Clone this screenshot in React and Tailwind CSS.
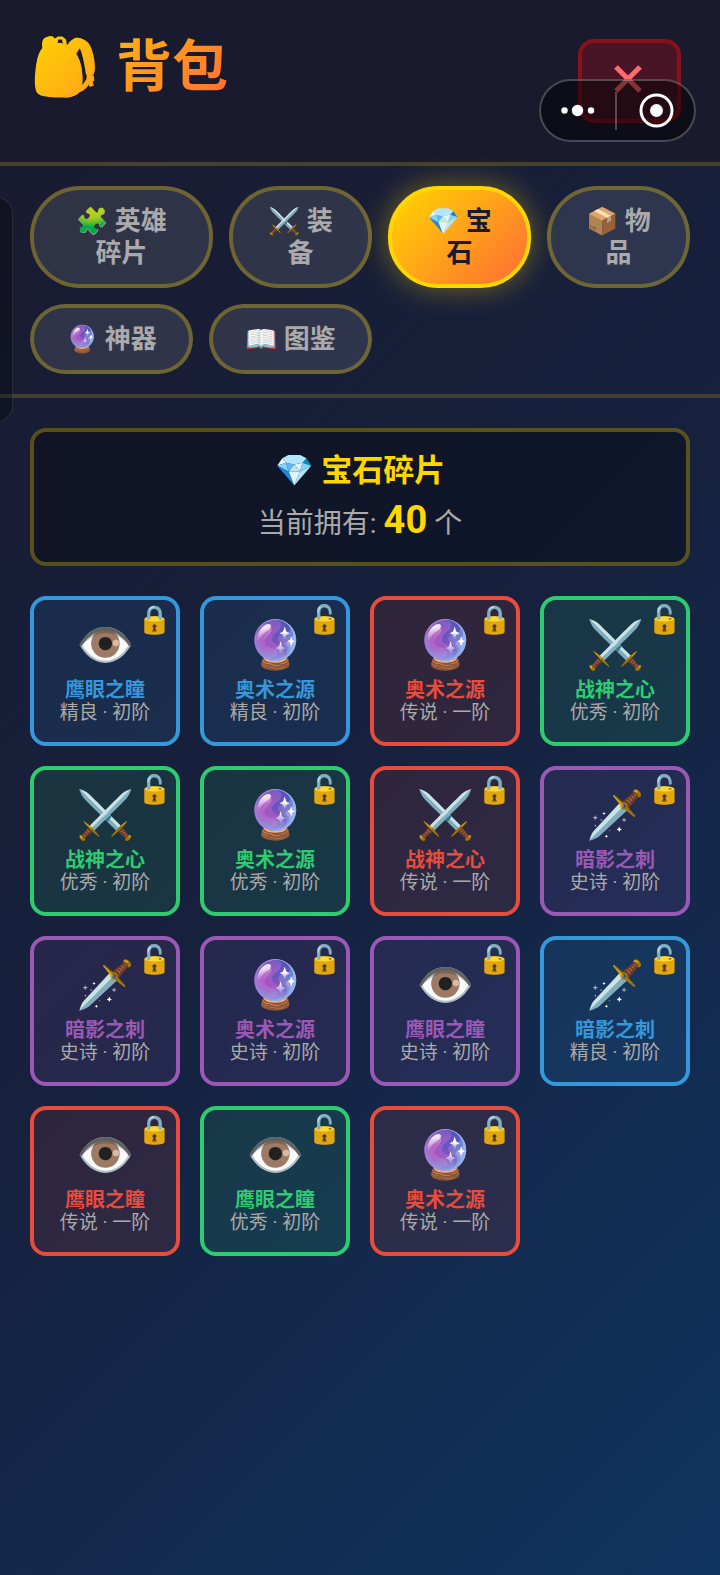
import React, { useState } from 'react';

const TABS = [
  { id: 'hero', icon: '🧩', label: '英雄碎片', width: 'w-[183px]' },
  { id: 'equip', icon: '⚔️', label: '装备', width: 'w-[143px]' },
  { id: 'gem', icon: '💎', label: '宝石', width: 'w-[143px]' },
  { id: 'item', icon: '📦', label: '物品', width: 'w-[143px]' },
  { id: 'artifact', icon: '🔮', label: '神器', width: 'w-[163px]' },
  { id: 'codex', icon: '📖', label: '图鉴', width: 'w-[163px]' },
];

const GEM_TYPES = {
  eye: { icon: '👁️', name: '鹰眼之瞳' },
  arcane: { icon: '🔮', name: '奥术之源' },
  war: { icon: '⚔️', name: '战神之心' },
  shadow: { icon: '🗡️', name: '暗影之刺' },
};

const QUALITIES = {
  good: { label: '优秀', box: 'border-[#2ecc71] bg-[#2ecc71]/12', text: 'text-[#2ecc71]' },
  fine: { label: '精良', box: 'border-[#3498db] bg-[#3498db]/12', text: 'text-[#3498db]' },
  epic: { label: '史诗', box: 'border-[#9b59b6] bg-[#9b59b6]/12', text: 'text-[#9b59b6]' },
  legend: { label: '传说', box: 'border-[#e74c3c] bg-[#e74c3c]/12', text: 'text-[#e74c3c]' },
};

const GEMS = [
  { type: 'eye', quality: 'fine', tier: '初阶', locked: true },
  { type: 'arcane', quality: 'fine', tier: '初阶', locked: false },
  { type: 'arcane', quality: 'legend', tier: '一阶', locked: true },
  { type: 'war', quality: 'good', tier: '初阶', locked: false },
  { type: 'war', quality: 'good', tier: '初阶', locked: false },
  { type: 'arcane', quality: 'good', tier: '初阶', locked: false },
  { type: 'war', quality: 'legend', tier: '一阶', locked: true },
  { type: 'shadow', quality: 'epic', tier: '初阶', locked: false },
  { type: 'shadow', quality: 'epic', tier: '初阶', locked: false },
  { type: 'arcane', quality: 'epic', tier: '初阶', locked: false },
  { type: 'eye', quality: 'epic', tier: '初阶', locked: false },
  { type: 'shadow', quality: 'fine', tier: '初阶', locked: false },
  { type: 'eye', quality: 'legend', tier: '一阶', locked: true },
  { type: 'eye', quality: 'good', tier: '初阶', locked: false },
  { type: 'arcane', quality: 'legend', tier: '一阶', locked: true },
];

const CloseIcon = () => (
  <svg className="w-7 h-7" viewBox="0 0 28 28" fill="none" stroke="#ff6b6b" strokeWidth="5">
    <path d="M2 2l24 24M26 2L2 26" />
  </svg>
);

// Mini-program capsule that floats over the header
const Capsule = () => (
  <div className="absolute top-[79px] right-6 flex h-[63px] w-[157px] items-center rounded-full border-2 border-white/25 bg-black/50">
    <button aria-label="更多" className="flex w-[74px] justify-center">
      <svg className="w-9 h-4" viewBox="0 0 36 16" fill="#fff">
        <circle cx="4.500" cy="7.500" r="3.2" />
        <circle cx="17.500" cy="7.500" r="5.7" />
        <circle cx="31" cy="7.500" r="3.2" />
      </svg>
    </button>
    <span className="h-[38px] w-0.5 bg-white/25" />
    <button aria-label="关闭小程序" className="flex flex-1 justify-center">
      <svg className="w-9 h-9" viewBox="0 0 36 36">
        <circle cx="18.500" cy="17.500" r="15.500" fill="none" stroke="#fff" strokeWidth="3" />
        <circle cx="18.500" cy="17.500" r="6.500" fill="#fff" />
      </svg>
    </button>
  </div>
);

const GemCard = ({ gem }) => {
  const type = GEM_TYPES[gem.type];
  const quality = QUALITIES[gem.quality];
  return (
    <button className={`relative flex aspect-square flex-col items-center rounded-2xl border-4 pt-3 ${quality.box}`}>
      <span className="absolute top-1 right-1 text-[28px] leading-8">{gem.locked ? '🔒' : '🔓'}</span>
      <span className="text-[47px] leading-[66px]">{type.icon}</span>
      <span className={`text-[20px] leading-6 font-bold ${quality.text}`}>{type.name}</span>
      <span className="text-[19px] leading-[22px] text-[#aaaaaa]">{quality.label} · {gem.tier}</span>
    </button>
  );
};

export default function App() {
  const [activeTab, setActiveTab] = useState('gem');

  return (
    <div className="relative min-h-screen overflow-hidden bg-linear-[135deg,#1a1a2e_0%,#16213e_50%,#0f3460_100%] font-[Roboto,'Noto_Sans_CJK_SC',sans-serif]">
      <header className="flex h-[166px] items-start justify-between border-b-4 border-[#45412a] bg-[#1a1a2e] pt-8 pr-[39px] pl-[30px]">
        <h1 className="flex gap-4 bg-linear-[135deg,#ffd700,#ff6b35] bg-clip-text text-[56px] leading-[70px] font-bold text-transparent">
          <span>🎒</span>
          <span>背包</span>
        </h1>
        <button aria-label="关闭" className="mt-[7px] flex h-[84px] w-[103px] items-center justify-center rounded-2xl border-4 border-[#8b1119] bg-[#481526] pr-1 pb-1">
          <CloseIcon />
        </button>
      </header>

      <nav className="flex flex-wrap gap-4 border-b-4 border-[#3f3f36] px-[30px] py-5">
        {TABS.map((tab) => (
          <button
            key={tab.id}
            onClick={() => setActiveTab(tab.id)}
            className={`${tab.width} rounded-[50px] border-4 px-8 py-[15px] text-[26px] leading-8 font-bold ${
              activeTab === tab.id
                ? 'border-[#ffd700] bg-linear-[135deg,#ffd700,#ff6b35] text-[#1a1a2e] shadow-[0_0_30px_rgba(255,215,0,0.4)]'
                : 'border-[#ffd700]/30 bg-white/10 text-[#aaaaaa]'
            }`}
          >
            {tab.icon} {tab.label}
          </button>
        ))}
      </nav>

      <main className="flex flex-col gap-[30px] p-[30px]">
        <section className="rounded-2xl border-4 border-[#ffd700]/30 bg-black/30 pt-4 pb-3 text-center">
          <h2 className="text-[31px] leading-[46px] font-bold text-[#ffd700]">💎 宝石碎片</h2>
          <p className="text-[28px] leading-[52px] text-[#aaaaaa]">
            当前拥有: <span className="text-[38px] font-bold text-[#ffd700]">40</span> 个
          </p>
        </section>

        <div className="grid grid-cols-4 gap-5">
          {GEMS.map((gem, index) => (
            <GemCard key={index} gem={gem} />
          ))}
        </div>
      </main>

      <div className="absolute top-[197px] -left-5 h-[225px] w-[33px] rounded-2xl border border-white/10 bg-black/30" />
      <Capsule />
    </div>
  );
}
